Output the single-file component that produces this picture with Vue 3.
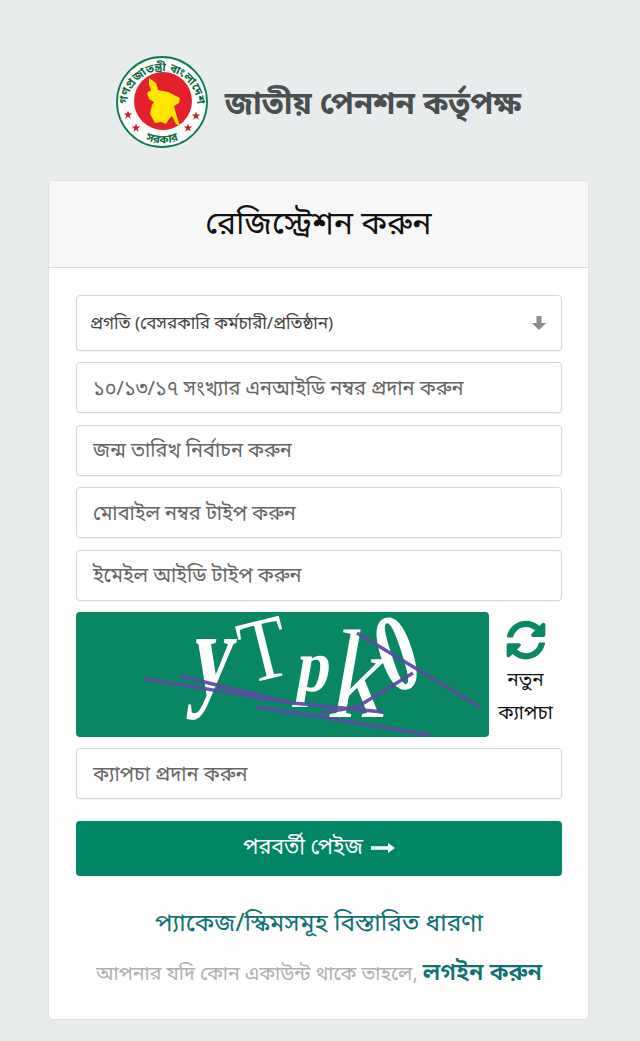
<template>
  <div class="page">
    <header class="brand">
      <svg class="seal" viewBox="0 0 92 92" aria-label="seal">
        <defs>
          <path id="arcTop" d="M11 50 A35 35 0 1 1 81 50" />
          <path id="arcBottom" d="M20 78 A41 41 0 0 0 72 78" />
        </defs>
        <circle cx="46" cy="46" r="45" fill="#fff" stroke="#0d7c4f" stroke-width="1.8" />
        <circle cx="47" cy="45" r="29" fill="#e3202b" />
        <text class="seal-text"><textPath href="#arcTop" startOffset="50%" text-anchor="middle">গণপ্রজাতন্ত্রী বাংলাদেশ</textPath></text>
        <text class="seal-text"><textPath href="#arcBottom" startOffset="50%" text-anchor="middle">সরকার</textPath></text>
        <path d="M33 22L40 27 42 34 52 36 64 42 63 47 58 50 60 58 64 70 60 68 56 60 53 63 50 68 45 66 39 67 34 58 36 49 38 46 33 43 31 37 35 34 33 29z" fill="#ffe600" />
        <g fill="#c8202c">
          <polygon v-for="s in stars" :key="s" :points="starPoints" :transform="s" />
        </g>
      </svg>
      <div class="brand-name">জাতীয় পেনশন কর্তৃপক্ষ</div>
    </header>

    <main class="card">
      <div class="card-header">রেজিস্ট্রেশন করুন</div>
      <div class="card-body">
        <div class="select">
          <span>প্রগতি (বেসরকারি কর্মচারী/প্রতিষ্ঠান)</span>
          <svg class="select-arrow" viewBox="0 0 16 16"><path d="M5.5 1h5v7h4.5L8 15 1 8h4.5z" /></svg>
        </div>
        <div v-for="p in fields" :key="p" class="input">{{ p }}</div>

        <div class="captcha-row">
          <svg class="captcha" viewBox="0 0 413 125">
            <g fill="#fff" font-family="Liberation Serif, serif" font-size="60">
              <text transform="translate(112 82) skewX(-8) scale(1.4 2)" font-weight="700">y</text>
              <text transform="translate(172 72) rotate(-14) scale(1.3 1.5)">T</text>
              <text transform="translate(218 79) skewX(-10) scale(1 1.25)" font-weight="700">p</text>
              <text transform="translate(250 105) skewX(-10) scale(1.9 2.1)">k</text>
              <text transform="translate(314 82) rotate(-18) scale(1.25 1.85)" font-weight="700">0</text>
            </g>
            <g fill="none" stroke="#5b4aa0" stroke-width="3.5" opacity="0.92">
              <polyline points="69,67 217,91 307,100" />
              <line x1="104" y1="64" x2="214" y2="91" />
              <line x1="181" y1="95" x2="354" y2="123" />
              <line x1="281" y1="21" x2="404" y2="95" />
              <polyline points="244,101 281,95 337,61" />
            </g>
          </svg>
          <div class="captcha-refresh">
            <svg class="refresh-icon" viewBox="0 0 512 512"><path d="M370.72 133.28C339.458 104.008 298.888 87.962 255.848 88c-77.458.068-144.328 53.178-162.791 126.85-1.344 5.363-6.122 9.15-11.651 9.15H24.103c-7.498 0-13.194-6.807-11.807-14.176C33.933 94.924 134.813 8 256 8c66.448 0 126.791 26.136 171.315 68.685L463.03 40.97C478.149 25.851 504 36.559 504 57.941V192c0 13.255-10.745 24-24 24H345.941c-21.382 0-32.09-25.851-16.971-40.971l41.75-41.749zM32 296h134.059c21.382 0 32.09 25.851 16.971 40.971l-41.75 41.75c31.262 29.273 71.835 45.319 114.876 45.28 77.418-.07 144.315-53.144 162.787-126.849 1.344-5.363 6.122-9.15 11.651-9.15h57.304c7.498 0 13.194 6.807 11.807 14.176C478.067 417.076 377.187 504 256 504c-66.448 0-126.791-26.136-171.315-68.685L48.97 471.03C33.851 486.149 8 475.441 8 454.059V320c0-13.255 10.745-24 24-24z" /></svg>
            <div>নতুন<br />ক্যাপচা</div>
          </div>
        </div>

        <div class="input">ক্যাপচা প্রদান করুন</div>

        <button class="next-btn">
          <span>পরবর্তী পেইজ</span>
          <svg class="next-arrow" viewBox="0 0 24 12"><path d="M0 4.3h17V1l7 5-7 5V7.7H0z" /></svg>
        </button>

        <a class="scheme-link">প্যাকেজ/স্কিমসমূহ বিস্তারিত ধারণা</a>
        <p class="login-line">আপনার যদি কোন একাউন্ট থাকে তাহলে, <a>লগইন করুন</a></p>
      </div>
    </main>
  </div>
</template>

<script setup>
const fields = [
  '১০/১৩/১৭ সংখ্যার এনআইডি নম্বর প্রদান করুন',
  'জন্ম তারিখ নির্বাচন করুন',
  'মোবাইল নম্বর টাইপ করুন',
  'ইমেইল আইডি টাইপ করুন'
]

const stars = ['translate(12 59)', 'translate(80 60)', 'translate(20 72)', 'translate(72 72)']
const starPoints = '0,-4.5 1.1,-1.4 4.3,-1.4 1.7,0.6 2.7,3.7 0,1.8 -2.7,3.7 -1.7,0.6 -4.3,-1.4 -1.1,-1.4'
</script>

<style>
html, body {
  background: #e9ecec;
}
</style>

<style scoped>
.page {
  width: 640px;
  height: 1041px;
  box-sizing: border-box;
  padding: 56px 51px 0 48px;
  font-family: "Noto Sans Bengali", "Noto Sans", "Liberation Serif", serif;
  overflow: hidden;
}

.brand {
  display: flex;
  align-items: center;
  justify-content: center;
  gap: 17px;
  height: 92px;
  margin-bottom: 32px;
}
.seal {
  width: 92px;
  height: 92px;
  flex: none;
}
.seal-text {
  font-size: 11.5px;
  font-weight: 700;
  fill: #0f6b45;
}
.brand-name {
  padding-top: 8px;
  font-size: 31.2px;
  font-weight: 700;
  color: #4a4f52;
}

.card {
  height: 840px;
  box-sizing: border-box;
  background: #fff;
  border: 1px solid #dfe2e2;
  border-radius: 5px;
  overflow: hidden;
}
.card-header {
  height: 87px;
  box-sizing: border-box;
  padding-top: 3px;
  display: flex;
  align-items: center;
  justify-content: center;
  background: #f7f7f7;
  border-bottom: 1px solid #dcdcdc;
  font-size: 32px;
  color: #111;
}
.card-body {
  padding: 27px 26px 0 27px;
  display: flex;
  flex-direction: column;
  gap: 11.4px;
}

.select, .input {
  box-sizing: border-box;
  display: flex;
  align-items: center;
  background: #fff;
  border: 1px solid #d5d7d9;
  border-radius: 4px;
  box-shadow: 0 1px 1px rgba(0, 0, 0, 0.05);
  color: #555;
}
.select {
  height: 56px;
  justify-content: space-between;
  padding: 3px 14px 0 13px;
  font-size: 17px;
  color: #444;
}
.select-arrow {
  width: 16px;
  height: 16px;
  margin-top: -3px;
  fill: #8a8a8a;
}
.input {
  height: 51px;
  padding: 4px 16px 0;
  font-size: 19.9px;
  color: #666;
}

.captcha-row {
  display: flex;
  align-items: stretch;
}
.captcha {
  width: 413px;
  height: 125px;
  flex: none;
  background: #0a8765;
  border-radius: 4px;
}
.captcha-refresh {
  flex: 1;
  display: flex;
  flex-direction: column;
  align-items: center;
  gap: 5px;
  padding-top: 8px;
  font-size: 19px;
  line-height: 33px;
  text-align: center;
  color: #111;
}
.refresh-icon {
  width: 40px;
  height: 40px;
  fill: #0a8765;
}

.next-btn {
  height: 55px;
  margin-top: 10.2px;
  display: flex;
  align-items: center;
  justify-content: center;
  gap: 8px;
  border: none;
  border-radius: 4px;
  background: #018567;
  color: #fff;
  font: inherit;
  font-size: 21.5px;
}
.next-arrow {
  width: 24px;
  height: 12px;
  fill: #fff;
}

.scheme-link {
  margin-top: 22px;
  text-align: center;
  font-size: 24.5px;
  color: #0f7173;
}
.login-line {
  margin: 5px 0 0;
  text-align: center;
  font-size: 19.6px;
  color: #b0b0b0;
}
.login-line a {
  font-size: 23.5px;
  font-weight: 600;
  color: #0f7173;
}
</style>
